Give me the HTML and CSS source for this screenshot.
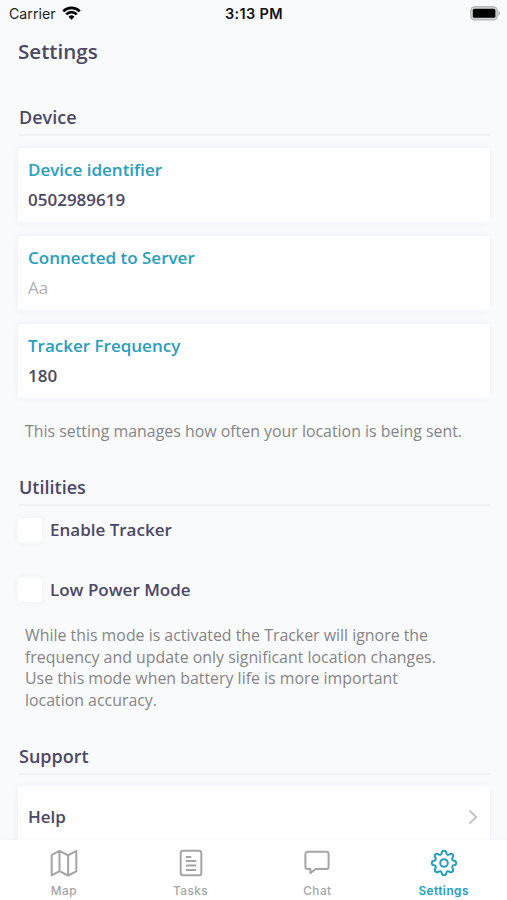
FILE: index.html
```html
<!DOCTYPE html>
<html lang="en">
<head>
<meta charset="utf-8">
<title>Settings</title>
<link rel="stylesheet" href="styles.css">
</head>
<body>
<div class="app">
  <header class="status">
    <div class="carrier"><span>Carrier</span>
      <svg width="19" height="15" viewBox="0 0 19 15" fill="none" stroke="#000" stroke-width="2.6"><path d="M1.3 5.3a11.6 11.6 0 0 1 16.4 0M4.2 8.3a7.5 7.5 0 0 1 10.6 0"/><path d="M9.5 13.7 6.6 10.8a4.1 4.1 0 0 1 5.8 0z" fill="#000" stroke="none"/></svg>
    </div>
    <div class="time">3:13 PM</div>
    <svg class="battery" width="31" height="15" viewBox="0 0 31 15"><rect x=".8" y=".8" width="26.4" height="13" rx="3.8" fill="#d5d6d6" stroke="#b9bbba" stroke-width="1.4"/><rect x="2.8" y="2.8" width="22.6" height="9" rx="1.6" fill="#000"/><path d="M28.4 4.8c2.2 .9 2.2 4.1 0 5z" fill="#b5b7b6"/></svg>
  </header>
  <main class="content">
    <h1 class="title">Settings</h1>
    <section class="section device">
      <h2 class="heading">Device</h2>
      <div class="cards">
        <div class="card"><span class="label">Device identifier</span><span class="value">0502989619</span></div>
        <div class="card"><span class="label">Connected to Server</span><span class="value empty">Aa</span></div>
        <div class="card"><span class="label">Tracker Frequency</span><span class="value">180</span></div>
      </div>
      <p class="note">This setting manages how often your location is being sent.</p>
    </section>
    <section class="section utilities">
      <h2 class="heading">Utilities</h2>
      <div class="option"><span class="box"></span><span class="name">Enable Tracker</span></div>
      <div class="option"><span class="box"></span><span class="name">Low Power Mode</span></div>
      <p class="note long">While this mode is activated the Tracker will ignore the<br>frequency and update only significant location changes.<br>Use this mode when battery life is more important<br>location accuracy.</p>
    </section>
    <section class="section support">
      <h2 class="heading">Support</h2>
      <div class="card link"><span>Help</span>
        <svg width="10" height="16" viewBox="0 0 10 16" fill="none" stroke="#b9b9b9" stroke-width="1.7"><path d="M1.4 1.5 8.2 8l-6.8 6.5"/></svg>
      </div>
    </section>
  </main>
  <nav class="tabs">
    <div class="tab"><svg width="28" height="28" viewBox="0 0 28 28"><path d="M1.7 5.9 9.5 1.8v20.4l-7.8 4.1zM9.5 1.8l8.6 4.5v20.2l-8.6-4.3M18.1 6.3l8.2-4.4v20.4l-8.2 4.2"/></svg><span>Map</span></div>
    <div class="tab"><svg width="28" height="28" viewBox="0 0 28 28"><rect x="3.7" y="1.7" width="20.6" height="24.6" rx="2.4"/><path d="M8.8 7.9h5.5M8.8 12.1h10.4M8.8 16.6h10.4M8.8 21.1h10.4"/></svg><span>Tasks</span></div>
    <div class="tab"><svg width="28" height="28" viewBox="0 0 28 28"><path d="M4.6 2.7h18.8a2.2 2.2 0 0 1 2.2 2.2v12.9a2.2 2.2 0 0 1-2.2 2.2H12.5l-5.1 4.2V20H4.6a2.2 2.2 0 0 1-2.2-2.2V4.9a2.2 2.2 0 0 1 2.2-2.2z"/></svg><span>Chat</span></div>
    <div class="tab active"><svg width="28" height="28" viewBox="0 0 28 28"><circle cx="14" cy="14" r="3.8"/><path d="M11.7 4.1C12.1 1 15.9 1 16.3 4.1C16.6 5.8 18 6.3 19.4 5.4C21.8 3.6 24.4 6.2 22.6 8.6C21.7 10 22.2 11.4 23.9 11.7C27 12.1 27 15.9 23.9 16.3C22.2 16.6 21.7 18 22.6 19.4C24.4 21.8 21.8 24.4 19.4 22.6C18 21.7 16.6 22.2 16.3 23.9C15.9 27 12.1 27 11.7 23.9C11.4 22.2 10 21.7 8.6 22.6C6.2 24.4 3.6 21.8 5.4 19.4C6.3 18 5.8 16.6 4.1 16.3C1 15.9 1 12.1 4.1 11.7C5.8 11.4 6.3 10 5.4 8.6C3.6 6.2 6.2 3.6 8.6 5.4C10 6.3 11.4 5.8 11.7 4.1Z"/></svg><span>Settings</span></div>
  </nav>
</div>
</body>
</html>
```
FILE: styles.css
```css
* { box-sizing: border-box; }
body { margin: 0; background: #f9fafc; font-family: "Open Sans", sans-serif; color: #4c4864; }
h1, h2, p { margin: 0; }
.app { width: 507px; height: 900px; display: flex; flex-direction: column; overflow: hidden; }
.status { height: 28px; flex: none; display: grid; grid-template-columns: 1fr auto 1fr; align-items: center; padding: 0 6px 2px 9px; font-family: Inter, sans-serif; font-size: 14.2px; color: #222; }
.carrier { display: flex; align-items: center; gap: 6px; }
.time { margin-left: -2px; font-weight: 600; font-size: 14.5px; letter-spacing: .35px; color: #111; }
.battery { justify-self: end; }
.content { flex: 1; min-height: 0; overflow: hidden; padding: 0 17px 0 18px; }
.title { height: 48px; font-size: 20.6px; line-height: 47px; font-weight: 600; }
.heading { height: 35px; margin-left: 1px; border-bottom: 2px solid #f1f2f4; font-size: 18px; line-height: 33px; font-weight: 600; }
.device { padding-top: 25px; }
.cards { display: flex; flex-direction: column; gap: 14px; padding-top: 12px; }
.card { display: flex; flex-direction: column; height: 74px; padding: 7px 10px; background: #fff; border-radius: 2px; box-shadow: 0 0 8px rgba(40, 50, 60, .045); font-size: 17px; line-height: 30px; font-weight: 600; }
.label { color: #2a9dbf; }
.empty { color: #b0b0b3; font-weight: 400; }
.note { padding: 22px 7px 0; font-size: 15.9px; line-height: 22px; color: #858585; }
.utilities { padding-top: 29px; }
.option { display: flex; align-items: center; gap: 8px; height: 24px; margin: 12px 0 36px; font-size: 17px; line-height: 22px; font-weight: 600; }
.name { margin-top: -1px; }
.box { width: 24px; height: 24px; background: #fff; border-radius: 3px; box-shadow: 0 0 8px rgba(40, 50, 60, .05); }
.long { padding-top: 0; margin-top: -13px; line-height: 21.6px; }
.support { padding-top: 29px; }
.link { flex-direction: row; justify-content: space-between; align-items: center; height: 62px; margin-top: 11px; padding: 0 12px 0 10px; }
.tabs { height: 60px; flex: none; display: grid; grid-template-columns: repeat(4, 1fr); background: #fff; font-family: Inter, sans-serif; font-size: 11.8px; font-weight: 500; letter-spacing: .45px; color: #a5a5a5; position: relative; box-shadow: 0 0 5px rgba(40, 50, 60, .04); }
.tab { display: flex; flex-direction: column; align-items: center; padding: 9px 0 0 1px; gap: 6px; line-height: 16px; }
.tab svg { fill: none; stroke: currentColor; stroke-width: 2; stroke-linejoin: round; }
.active { padding-left: 0; color: #2a9dbf; font-weight: 600; }
```
